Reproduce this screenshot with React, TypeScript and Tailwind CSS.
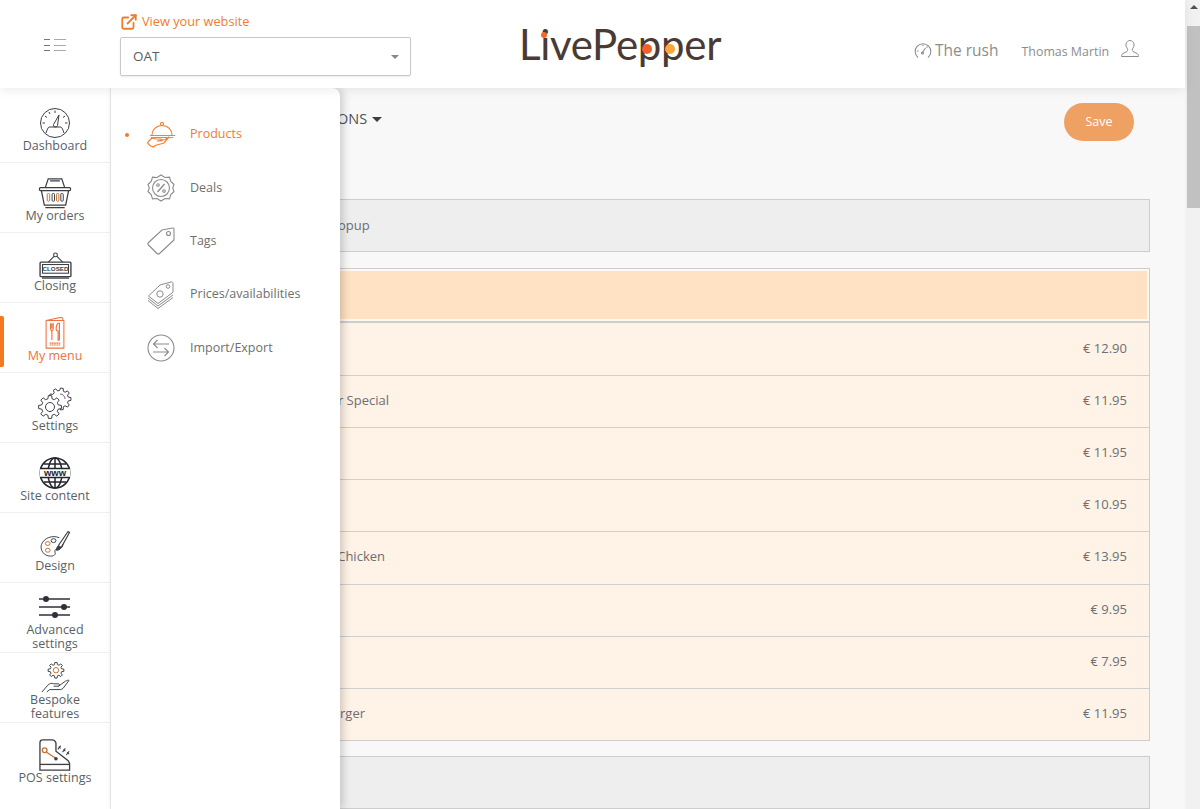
import { ExternalLink } from 'lucide-react'
import type { ReactNode } from 'react'

const dark = '#3b3f46'

// teeth outline for the cog icons
function gear(cx: number, cy: number, inner: number, outer: number, teeth: number) {
  const step = (Math.PI * 2) / teeth
  const pts: string[] = []
  for (let i = 0; i < teeth; i++) {
    const a = i * step
    const at = (r: number, t: number) => `${(cx + r * Math.cos(t)).toFixed(2)} ${(cy + r * Math.sin(t)).toFixed(2)}`
    pts.push(at(inner, a - step * 0.32), at(outer, a - step * 0.18), at(outer, a + step * 0.18), at(inner, a + step * 0.32))
  }
  return `M${pts.join('L')}Z`
}

const icons: Record<string, ReactNode> = {
  dashboard: (
    <svg viewBox="0 0 32 32" width="32" height="32" fill="none" stroke={dark} strokeWidth="1">
      <circle cx="16" cy="16" r="14.500" />
      <path d="M7 26c1-3 2-5.500 3-6h12c1 .5 2 3 3 6" />
      <path d="M14.500 17.500 20 8l-1.500 10.500a2 2 0 0 1-4-1z" />
      <path d="M16 3.500v2.500M6 9l2 1.500M3.500 16H6M26 9l-2 1.500M28.500 16H26M10 5l1 2" />
    </svg>
  ),
  orders: (
    <svg viewBox="0 0 34 34" width="34" height="33" fill="none" stroke={dark} strokeWidth="1">
      <path d="M7 12 10 3h14l3 9M12 5h10" strokeWidth="1.300" />
      <rect x="1" y="12" width="32" height="3" rx="1" strokeWidth="1.300" />
      <path d="m3 15 3 15h22l3-15M7 32.500h20" strokeWidth="1.300" />
      <rect x="9" y="18" width="2.500" height="8" rx="1" stroke="#c8702d" />
      <rect x="14" y="18" width="2.500" height="8" rx="1" />
      <rect x="18.500" y="18" width="2.500" height="8" rx="1" stroke="#c8702d" />
      <rect x="23" y="18" width="2.500" height="8" rx="1" />
    </svg>
  ),
  closing: (
    <svg viewBox="0 0 34 28" width="33" height="27" fill="none" stroke={dark} strokeWidth="1.100">
      <circle cx="17" cy="3" r="2" />
      <path d="m15.500 4.500-6 6M18.500 4.500l6 6" />
      <rect x="1" y="10.500" width="32" height="15" rx="1" strokeWidth="1.400" />
      <rect x="3.500" y="13" width="27" height="9" />
      <path d="M3 27h28" strokeWidth="1.400" />
      <text x="17" y="20" textAnchor="middle" fontSize="6.500" fontWeight="700" fill={dark} stroke="none" fontFamily="Liberation Sans, sans-serif">CLOSED</text>
    </svg>
  ),
  menu: (
    <svg viewBox="0 0 22 36" width="20" height="32" fill="none" stroke="#f0723c" strokeWidth="1">
      <path d="M1 4h20v31H1zM1 4l16-3.500c2-.3 3 .5 3 3.500" strokeWidth="1.200" />
      <path d="M6 7v6c0 2 1.500 3 1.500 3v10M9 7v6c0 2-1.500 3-1.500 3M7.500 7v6" strokeWidth="1.300" />
      <path d="M14.500 7c-2 2-2.500 5-2 8l2 1v10c1 .5 1.500 0 1.500-1V7z" strokeWidth="1.300" />
      <path d="M5 29.500h12M5 31.500h12" strokeWidth="1.400" strokeDasharray="2 .5" />
    </svg>
  ),
  settings: (
    <svg viewBox="0 0 34 32" width="34" height="32" fill="none" stroke={dark} strokeWidth="1">
      <path d={gear(22, 12, 8.5, 11, 9)} />
      <path d="M27 12a5 5 0 0 0-5-5" stroke="#8a5a8a" />
      <path d={gear(12, 20, 8.5, 11.5, 8)} fill="#fff" />
      <circle cx="12" cy="20" r="4.500" />
    </svg>
  ),
  site: (
    <svg viewBox="0 0 32 32" width="32" height="32" fill="none" stroke="#23262c" strokeWidth="1.500">
      <circle cx="16" cy="16" r="15" />
      <path d="M16 1v30M5 7h22M5 25h22" />
      <ellipse cx="16" cy="16" rx="7" ry="15" />
      <rect x="0.500" y="12" width="31" height="8" fill="#fff" stroke="none" />
      <path d="M1 11.500h30M1 20.500h30" />
      <text x="16" y="19" textAnchor="middle" fontSize="9.500" fontWeight="700" fill="#23262c" stroke="none" fontFamily="Liberation Sans, sans-serif">www</text>
    </svg>
  ),
  design: (
    <svg viewBox="0 0 32 30" width="31" height="29" fill="none" stroke={dark} strokeWidth="1">
      <path d="M20 8C13 5 4 8 1.500 15c-2 6 3 12 9 12 4 0 6-1.500 5-4-.8-2 .5-3.500 3-3.500 3 0 5.500-2 5-5" />
      <ellipse cx="8" cy="14" rx="2.500" ry="2" stroke="#c8702d" />
      <ellipse cx="14" cy="11" rx="2.500" ry="2" />
      <ellipse cx="8" cy="21" rx="2.500" ry="2" stroke="#c8702d" />
      <path d="m19 16 10-14.500 1.500 1L22 18" strokeWidth="1.200" />
      <path d="M22 18c-1 2-3 3-5 3 0-2 .5-3.500 2-5z" fill={dark} />
    </svg>
  ),
  advanced: (
    <svg viewBox="0 0 32 24" width="32" height="24" fill="none" stroke="#2e3137" strokeWidth="1.600">
      <path d="M0 4h31M0 12h31M0 20h31" />
      <circle cx="7" cy="4" r="3" fill="#2e3137" stroke="none" />
      <circle cx="25" cy="12" r="3" fill="#2e3137" stroke="none" />
      <circle cx="16" cy="20" r="3" fill="#2e3137" stroke="none" />
    </svg>
  ),
  bespoke: (
    <svg viewBox="0 0 30 32" width="29" height="31" fill="none" stroke={dark} strokeWidth="1">
      <path d={gear(15.500, 8.500, 6, 8.200, 8)} />
      <circle cx="15.500" cy="8.500" r="2.800" stroke="#c8702d" />
      <path d="M1 31l6-7c2-2 4-2.500 6-1.500h5c1.500 0 1.500 2.500 0 2.500h-5M18 25l7-5c1-.8 4-1.500 4-1l-6 8c-1 1-2 1.500-3 1.500H9L6 31" />
    </svg>
  ),
  pos: (
    <svg viewBox="0 0 34 34" width="32" height="32" fill="none" stroke={dark} strokeWidth="1.400">
      <path d="M1 26V4c0-2 1-3 3-3h10c2 0 3 1 4 3v9l13 10 1.500 3v7H1z" />
      <path d="M1 27h31.500" />
      <circle cx="6" cy="12" r="2.500" stroke="#c8702d" />
      <path d="m8 14 9 6" stroke="#c8702d" />
      <circle cx="18" cy="21" r="1.200" fill={dark} />
      <path d="m21 8 2 2M26 11l2 2M30 14l2 2M20 11l3-4M25 14l3-4M29 17l3-4" strokeWidth="1.100" />
    </svg>
  ),
  products: (
    <svg viewBox="0 0 28 26" width="28" height="26" fill="none" stroke="#f58233" strokeWidth="1.200">
      <circle cx="15" cy="2" r="1.500" />
      <path d="M5 13c0-5 4-9.500 10-9.500S25 8 25 13" />
      <path d="M3 13.500h25M4 15.500h22" />
      <path d="M1 20l4-4 4 1h5c1.500 0 1.500 2 0 2h-4l8-1.500 4-2.500-5 6-9 2.500-1.500 1.500-3-1-3-3z" />
    </svg>
  ),
  deals: (
    <svg viewBox="0 0 28 28" width="28" height="28" fill="none" stroke="#8b8b8b" strokeWidth="1.100">
      <path d="m14 1 4 2.500 4.500-.3 1.300 4.300 3.200 3-1.300 3.500 1.300 3.500-3.200 3-1.300 4.300-4.500-.3L14 27l-4-2.500-4.500.3L4.200 20.500 1 17.500 2.300 14 1 10.500l3.200-3 1.300-4.300 4.500.3z" />
      <circle cx="14" cy="14" r="8.500" />
      <path d="m10.500 18 7-8" strokeWidth="1.400" />
      <circle cx="11" cy="11" r="1.300" />
      <circle cx="17" cy="17" r="1.300" />
    </svg>
  ),
  tags: (
    <svg viewBox="0 0 28 28" width="28" height="28" fill="none" stroke="#8b8b8b" strokeWidth="1.100">
      <path d="M15 3 25.500 1c1-.2 1.500.3 1.500 1.300V13L12.500 26.500c-.8.8-1.700.8-2.500 0L1.500 18c-.8-.8-.8-1.700 0-2.500z" />
      <circle cx="21.500" cy="6.500" r="2" />
    </svg>
  ),
  prices: (
    <svg viewBox="0 0 28 28" width="28" height="28" fill="none" stroke="#8b8b8b" strokeWidth="1">
      <path d="M13 4 24 1c1-.2 2 .3 2 1.300v9L11 22.500 1.500 15z" />
      <path d="m1 17 10 8 15-11M1 19.500l10 8 15-11" />
      <circle cx="21" cy="5.500" r="1.800" />
      <circle cx="13" cy="13" r="3.200" />
    </svg>
  ),
  importExport: (
    <svg viewBox="0 0 28 28" width="28" height="28" fill="none" stroke="#8b8b8b" strokeWidth="1.100">
      <circle cx="14" cy="14" r="13" />
      <path d="M7 10h15M10.500 6 6.500 10l4 4" />
      <path d="M6 18h15M17.500 14l4 4-4 4" />
    </svg>
  ),
}

const railItems = [
  { icon: 'dashboard', label: ['Dashboard'], pad: 'pb-[9px]' },
  { icon: 'orders', label: ['My orders'], pad: 'pb-[9px]' },
  { icon: 'closing', label: ['Closing'], pad: 'pb-[9px]' },
  { icon: 'menu', label: ['My menu'], pad: 'pb-[9px]', active: true },
  { icon: 'settings', label: ['Settings'], pad: 'pb-[9px]' },
  { icon: 'site', label: ['Site content'], pad: 'pb-[9px]' },
  { icon: 'design', label: ['Design'], pad: 'pb-[9px]' },
  { icon: 'advanced', label: ['Advanced', 'settings'], pad: 'pb-[1px]', lift: 'pb-[4px]' },
  { icon: 'bespoke', label: ['Bespoke', 'features'], pad: 'pb-[1px]' },
  { icon: 'pos', label: ['POS settings'], pad: 'pb-[8px]' },
]

const subItems = [
  { icon: 'products', label: 'Products', active: true },
  { icon: 'deals', label: 'Deals' },
  { icon: 'tags', label: 'Tags' },
  { icon: 'prices', label: 'Prices/availabilities' },
  { icon: 'importExport', label: 'Import/Export' },
]

// name widths keep the part of each label that shows past the flyout in place
const products = [
  { name: '', end: 'w-[220px]', price: '€ 12.90', row: 'h-[52px]' },
  { name: 'Burger Special', end: 'w-[247px]', price: '€ 11.95', row: 'h-[52px] border-t border-[#cfcfcf] pb-[1px]' },
  { name: '', end: 'w-[220px]', price: '€ 11.95', row: 'h-[52px] border-t border-[#cfcfcf] pb-[1px]' },
  { name: '', end: 'w-[220px]', price: '€ 10.95', row: 'h-[52px] border-t border-[#cfcfcf] pb-[1px]' },
  { name: 'Crispy Chicken', end: 'w-[243px]', price: '€ 13.95', row: 'h-[53px] border-t border-[#cfcfcf] pb-[2px]' },
  { name: '', end: 'w-[220px]', price: '€ 9.95', row: 'h-[52px] border-t border-[#cfcfcf] pb-[1px]' },
  { name: '', end: 'w-[220px]', price: '€ 7.95', row: 'h-[52px] border-t border-[#cfcfcf] pb-[1px]' },
  { name: 'Cheeseburger', end: 'w-[223px]', price: '€ 11.95', row: 'h-[52px] border-t border-[#cfcfcf] pb-[1px]' },
]

function Logo() {
  return (
    <div className="relative font-['Lato',sans-serif] text-[42px] leading-none tracking-[-0.3px] text-[#4a3a34]">
      LivePepper
      <span className="absolute left-[22px] top-[9px] h-[6px] w-[6px] rounded-full bg-[#f4682a]" />
      <span className="absolute left-[123px] top-[21px] h-[10px] w-[10px] rounded-full bg-[#f0602a]" />
      <span className="absolute left-[146px] top-[21px] h-[10px] w-[10px] rounded-full bg-[#fba63a]" />
    </div>
  )
}

export default function App() {
  return (
    <div className="flex h-[809px] w-full overflow-hidden bg-[#f8f8f8] font-['Open_Sans',sans-serif] text-[12.5px] text-[#6b6f75]">
      <div className="relative flex min-w-0 flex-1 flex-col">
        <header className="relative z-20 flex h-[88px] shrink-0 items-center bg-white shadow-[0_2px_10px_rgba(0,0,0,0.08)]">
          <div className="flex w-[120px] shrink-0 justify-center pr-[10px] pt-[2px]">
            <div className="flex gap-[4px]">
              <div className="flex w-[6px] flex-col gap-[4.500px]">
                <div className="h-px bg-[#777]" />
                <div className="h-px bg-[#777]" />
                <div className="h-px bg-[#777]" />
              </div>
              <div className="flex w-[12px] flex-col gap-[4.500px]">
                <div className="h-px bg-[#aaa]" />
                <div className="h-px bg-[#aaa]" />
                <div className="h-px bg-[#aaa]" />
              </div>
            </div>
          </div>
          <div className="flex w-[291px] shrink-0 flex-col">
            <a className="mb-[6px] flex items-center gap-[4px] text-[12.750px] text-[#f47b2b]">
              <ExternalLink size={18} strokeWidth={2.400} />
              View your website
            </a>
            <div className="flex h-[39px] items-center justify-between rounded-[2px] border border-[#c9c9c9] bg-white pl-[12px] pr-[11px] shadow-[0_1px_2px_rgba(0,0,0,0.08)]">
              <span className="text-[13.500px] text-[#5c5c5c]">OAT</span>
              <span className="h-0 w-0 border-x-[4px] border-t-[4px] border-x-transparent border-t-[#888]" />
            </div>
          </div>
          <div className="ml-[108px] w-[260px]">
            <Logo />
          </div>
          <div className="ml-[135px] mt-[14px] flex items-center text-[#8d8d8d]">
            <svg viewBox="0 0 18 18" width="18" height="18" fill="none" stroke="#8d8d8d" strokeWidth="1.100">
              <path d="M4 15.500a7.800 7.800 0 1 1 10 0" />
              <path d="m8 11 3.500-5M3 9h1.500M9 2.500V4M13.500 4.500l-1 1" />
              <circle cx="8.500" cy="11" r="1" />
            </svg>
            <span className="ml-[3px] text-[15.500px]">The rush</span>
            <span className="ml-[23px] mt-[3px] text-[12.400px]">Thomas Martin</span>
            <svg className="ml-[12px] -mt-[5px]" viewBox="0 0 18 18" width="18" height="18" fill="none" stroke="#8d8d8d" strokeWidth="1">
              <path d="M6 8c-.8-1-1.200-2.500-1-4 .3-2 2-3.500 4-3.500s3.700 1.500 4 3.500c.2 1.500-.2 3-1 4-.8 1-1 2.500 0 3.500l4 2c1 .5 1.500 1.500 1.500 3H.5c0-1.500.5-2.500 1.500-3l4-2c1-1 .8-2.500 0-3.500z" />
            </svg>
          </div>
        </header>

        <div className="flex min-h-0 flex-1">
          <nav className="relative z-10 flex h-full w-[111px] shrink-0 flex-col border-r border-[#ececec] bg-white pt-[4.500px]">
            {railItems.map((item, i) => (
              <div
                key={item.icon}
                className={`relative flex h-[70.100px] shrink-0 flex-col items-center justify-end leading-[14px] ${item.pad} ${i < railItems.length - 1 ? 'border-b border-[#f0f0f0]' : ''} ${item.active ? 'text-[#f0723c]' : 'text-[#5b5f66]'}`}
              >
                {item.active && <span className="absolute left-0 top-[13px] h-[51px] w-[4px] rounded-r-[2px] bg-[#f57a1f]" />}
                <div className={`flex flex-1 items-end justify-center ${item.lift ?? ''}`}>{icons[item.icon]}</div>
                {item.label.map((line) => (
                  <span key={line}>{line}</span>
                ))}
              </div>
            ))}
          </nav>

          <main className="relative min-w-0 flex-1 pr-[35px]">
            <div className="absolute bottom-0 left-0 top-0 z-10 w-[229px] rounded-tr-[8px] bg-white pt-[20px] shadow-[3px_0_8px_rgba(0,0,0,0.18)]">
              {subItems.map((item) => (
                <div key={item.label} className={`flex h-[53.400px] items-center ${item.active ? 'text-[#f47b2b]' : 'text-[#6f6f6f]'}`}>
                  <span className={`ml-[14px] h-[4px] w-[4px] rounded-full ${item.active ? 'bg-[#f47b2b]' : ''}`} />
                  <span className="ml-[17px] flex w-[29px] justify-center">{icons[item.icon]}</span>
                  <span className="ml-[15px]">{item.label}</span>
                </div>
              ))}
            </div>

            <div className="flex h-[111px] items-start justify-between pt-[15px]">
              <div className="ml-[226px] flex items-center pt-[5px] text-[14.500px] leading-[22px] text-[#4f5358]">
                ONS
                <span className="ml-[5px] h-0 w-0 border-x-[5px] border-t-[5px] border-x-transparent border-t-[#3f3f3f]" />
              </div>
              <button className="mr-[16px] h-[38px] w-[70px] rounded-[19px] bg-[#efa063] text-[12.500px] text-white">Save</button>
            </div>

            <div className="ml-[30px] flex h-[53px] items-center border border-[#cdcdcd] bg-[#eeeeee] pl-[196px] text-[13px]">opup</div>

            <div className="ml-[30px] mt-[16px] border border-[#cdcdcd] bg-[#fff2e6] text-[13px]">
              <div className="h-[54px] border-b-[2px] border-[#cdcdcd]">
                <div className="h-full border-2 border-[#fff8ef] bg-[#fee2c3]" />
              </div>
              {products.map((p, i) => (
                <div key={i} className={`flex items-center justify-between pr-[22px] ${p.row}`}>
                  <span className={`${p.end} whitespace-nowrap text-right`}>{p.name}</span>
                  <span>{p.price}</span>
                </div>
              ))}
            </div>

            <div className="ml-[30px] mt-[15px] h-[53px] border border-[#cdcdcd] bg-[#eeeeee]" />
          </main>
        </div>
      </div>

      <div className="flex w-[15px] shrink-0 flex-col bg-[#f1f1f1] pl-[2px]">
        <div className="flex h-[26px] items-start justify-center pt-[5px]">
          <span className="h-0 w-0 border-x-[4px] border-b-[4px] border-x-transparent border-b-[#505050]" />
        </div>
        <div className="h-[182px] bg-[#c1c1c1]" />
      </div>
    </div>
  )
}
